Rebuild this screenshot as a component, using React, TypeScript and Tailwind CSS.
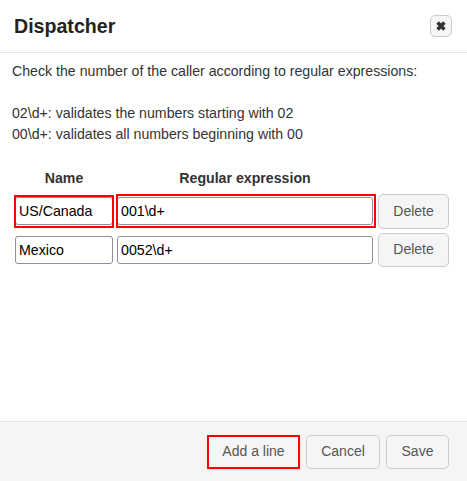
const inputClass = "h-[28px] rounded-[3px] border border-[#8f8f9d] bg-white px-[3px] text-[14.2px] text-black";
const btnClass = "rounded-[5px] border border-[#ccc] bg-[#f5f5f5] text-[14px] text-[#555]";

function Row({ name, regex, marked }: { name: string; regex: string; marked?: boolean }) {
  return (
    <div className="flex items-center">
      <div className="relative ml-[15px] w-[98px]">
        <input readOnly value={name} className={`${inputClass} w-full`} />
        {marked && <div className="absolute -inset-x-px -top-[2px] -bottom-[3px] border-2 border-[#f00]" />}
      </div>
      <div className="relative ml-[4px] w-[256px]">
        <input readOnly value={regex} className={`${inputClass} w-full`} />
        {marked && <div className="absolute -left-px -right-[3px] -top-[3px] -bottom-[3px] border-2 border-[#f00]" />}
      </div>
      <button className={`${btnClass} ml-[5px] h-[34.5px] w-[71px]`}>Delete</button>
    </div>
  );
}

export default function App() {
  return (
    <div className="flex h-[481px] w-[467px] flex-col bg-white font-['Liberation_Sans',Arial,sans-serif] text-[14.17px] text-[#333]">
      <div className="flex h-[53px] items-center justify-between border-b border-[#e5e5e5] pl-[14px] pr-[15px]">
        <h1 className="pt-[1px] text-[19.6px] font-bold text-[#222]">Dispatcher</h1>
        <button className="flex h-[22px] w-[22px] items-center justify-center rounded-[5px] border border-[#ccc] bg-[#f5f5f5]">
          <svg width="12" height="12" viewBox="0 0 12 12">
            <path d="M2.6 2.6 L9.4 9.4 M9.4 2.6 L2.6 9.4" stroke="#333" strokeWidth="3.6" />
          </svg>
        </button>
      </div>

      <div className="flex-1">
        <div className="px-[12px] pt-[8px] leading-[21px]">
          <p>Check the number of the caller according to regular expressions:</p>
          <p className="mt-[21px]">02\d+: validates the numbers starting with 02</p>
          <p>00\d+: validates all numbers beginning with 00</p>
        </div>
        <div className="mt-[23px] flex font-bold leading-[20px]">
          <div className="ml-[15px] w-[98px] text-center">Name</div>
          <div className="ml-[4px] w-[256px] text-center">Regular expression</div>
        </div>
        <div className="mt-[6px] flex flex-col gap-[4px]">
          <Row name="US/Canada" regex="001\d+" marked />
          <Row name="Mexico" regex="0052\d+" />
        </div>
      </div>

      <div className="flex h-[60px] items-center justify-end border-t border-[#e5e5e5] bg-[#f5f5f5] pr-[18px]">
        <button className={`${btnClass} h-[34px] w-[93px] !rounded-none !border-2 !border-[#f00] shadow-[0_1px_2px_rgba(0,0,0,0.1)]`}>Add a line</button>
        <button className={`${btnClass} ml-[6px] h-[34px] w-[74px]`}>Cancel</button>
        <button className={`${btnClass} ml-[6px] h-[34px] w-[63px]`}>Save</button>
      </div>
    </div>
  );
}
